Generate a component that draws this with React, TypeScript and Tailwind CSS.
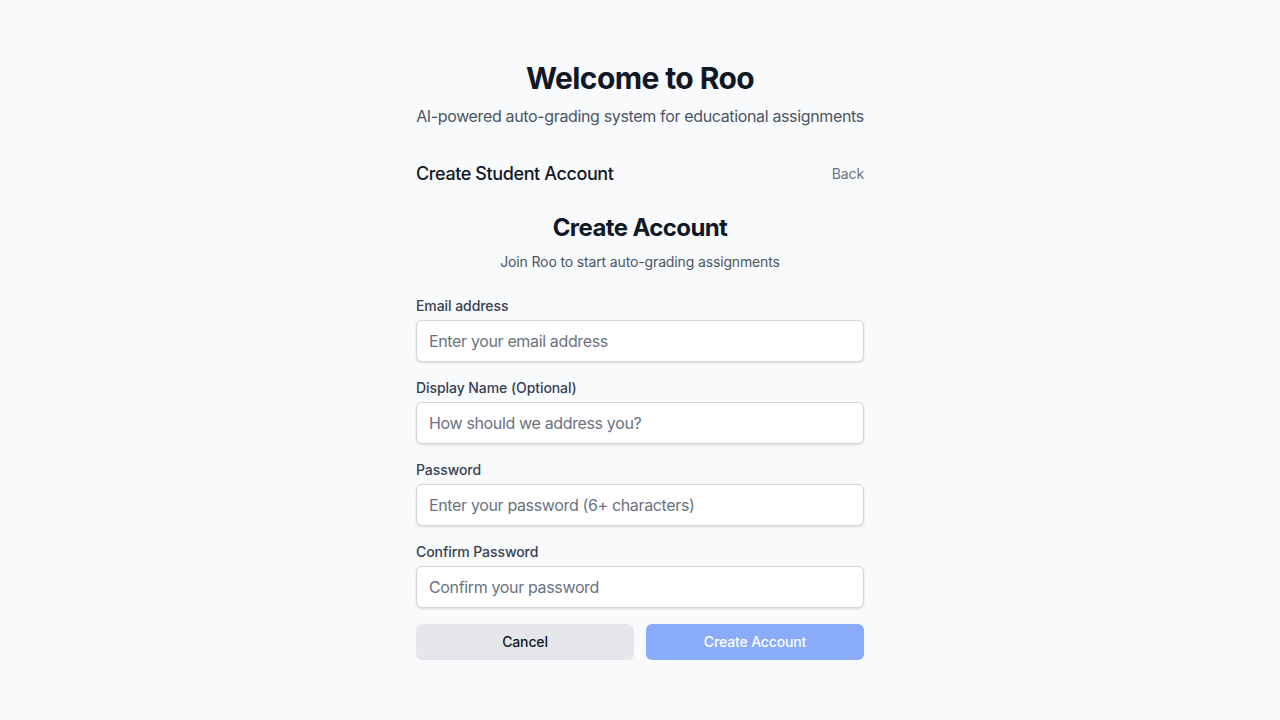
export default function App() {
  const fields = [
    { label: "Email address", ph: "Enter your email address", type: "email" },
    { label: "Display Name (Optional)", ph: "How should we address you?", type: "text" },
    { label: "Password", ph: "Enter your password (6+ characters)", type: "password" },
    { label: "Confirm Password", ph: "Confirm your password", type: "password" },
  ];
  return (
    <div className="min-h-screen bg-[#f9fafb] font-['Inter',sans-serif] flex justify-center pt-[60px]">
      <div className="w-[448px]">
        <div className="text-center">
          <h1 className="text-3xl font-bold tracking-[-0.02em] text-gray-900">Welcome to Roo</h1>
          <p className="mt-2 whitespace-nowrap text-base tracking-[-0.022em] text-gray-600">AI-powered auto-grading system for educational assignments</p>
        </div>
        <div className="mt-8 flex items-center justify-between">
          <h2 className="text-lg font-medium tracking-[-0.022em] text-gray-900">Create Student Account</h2>
          <button className="text-sm tracking-[-0.01em] text-gray-500">Back</button>
        </div>
        <div className="mt-6 text-center">
          <h3 className="text-2xl font-bold tracking-[-0.025em] text-gray-900">Create Account</h3>
          <p className="mt-2 text-sm tracking-[-0.01em] text-gray-600">Join Roo to start auto-grading assignments</p>
        </div>
        <form className="mt-6 flex flex-col gap-4">
          {fields.map((f) => (
            <div key={f.label}>
              <label className="block text-sm font-medium tracking-[-0.005em] text-gray-700">{f.label}</label>
              <input
                type={f.type}
                placeholder={f.ph}
                className="mt-1 block w-full rounded-md border border-gray-300 bg-white px-3 py-2 text-base tracking-[-0.022em] text-gray-900 placeholder-gray-500 shadow-sm outline-none"
              />
            </div>
          ))}
          <div className="flex gap-3">
            <button type="button" className="flex-1 rounded-md bg-gray-200 py-2 text-sm font-medium tracking-[-0.01em] text-gray-900">Cancel</button>
            <button type="button" className="flex-1 rounded-md bg-[#89abf8] py-2 text-sm font-medium tracking-[-0.01em] text-white">Create Account</button>
          </div>
        </form>
      </div>
    </div>
  );
}
